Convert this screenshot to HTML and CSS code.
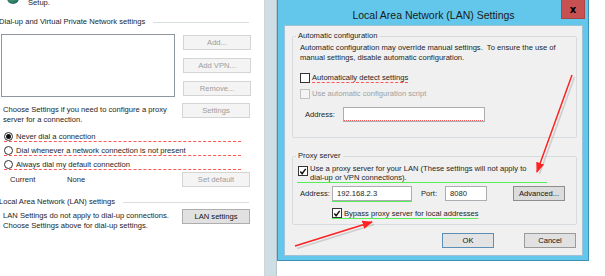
FILE: index.html
```html
<!DOCTYPE html>
<html lang="en">
<head>
    <meta charset="UTF-8">
    <title>Local Area Network (LAN) Settings</title>
    <link rel="stylesheet" href="styles.css">
</head>
<body>
    <div class="screen">
        <!-- Internet Options, Connections tab (behind) -->
        <div class="connections">
            <div class="setup">
                <span class="globe"></span>
                <span class="setup-text">Setup.</span>
            </div>
            <div class="heading heading-vpn">Dial-up and Virtual Private Network settings</div>
            <div class="vpn-row">
                <div class="listbox"></div>
                <div class="btn-col">
                    <div class="btn disabled">Add...</div>
                    <div class="btn disabled">Add VPN...</div>
                    <div class="btn disabled">Remove...</div>
                </div>
            </div>
            <div class="settings-row">
                <div class="note">Choose Settings if you need to configure a proxy<br>server for a connection.</div>
                <div class="btn disabled">Settings</div>
            </div>
            <div class="radios">
                <div class="radio-row"><span class="radio on"></span>Never dial a connection</div>
                <div class="radio-row"><span class="radio"></span>Dial whenever a network connection is not present</div>
                <div class="radio-row"><span class="radio"></span>Always dial my default connection</div>
            </div>
            <div class="current-row">
                <span class="current">Current</span>
                <span class="none">None</span>
                <div class="btn disabled">Set default</div>
            </div>
            <div class="heading heading-lan">Local Area Network (LAN) settings</div>
            <div class="lan-row">
                <div class="note">LAN Settings do not apply to dial-up connections.<br>Choose Settings above for dial-up settings.</div>
                <div class="btn">LAN settings</div>
            </div>
        </div>

        <div class="band"></div>

        <!-- LAN settings dialog -->
        <div class="dialog">
            <div class="titlebar">
                <span class="title">Local Area Network (LAN) Settings</span>
                <span class="close">x</span>
            </div>
            <div class="dialog-body">
                <fieldset class="group group-auto">
                    <legend>Automatic configuration</legend>
                    <div class="auto-note">Automatic configuration may override manual settings.&nbsp; To ensure the use of<br>manual settings, disable automatic configuration.</div>
                    <div class="check-row detect"><span class="check"></span><span class="red-dash">Automatically detect settings</span></div>
                    <div class="check-row script disabled-text"><span class="check off"></span>Use automatic configuration script</div>
                    <div class="field-row script-addr">
                        <span class="label">Address:</span>
                        <span class="input wide red-dot"></span>
                    </div>
                </fieldset>

                <fieldset class="group group-proxy">
                    <legend>Proxy server</legend>
                    <div class="check-row use-proxy green-line">
                        <span class="check">
                            <svg width="9" height="9" viewBox="0 0 9 9"><path d="M1.5 4.5 L3.5 7 L7.5 1.5" fill="none" stroke="#111" stroke-width="1.6"/></svg>
                        </span>
                        <span>Use a proxy server for your LAN (These settings will not apply to<br>dial-up or VPN connections).</span>
                    </div>
                    <div class="field-row proxy-addr">
                        <span class="label">Address:</span>
                        <span class="input addr green-under">192.168.2.3</span>
                        <span class="label port-label">Port:</span>
                        <span class="input port">8080</span>
                        <span class="btn advanced">Advanced...</span>
                    </div>
                    <div class="check-row bypass green-line">
                        <span class="check">
                            <svg width="9" height="9" viewBox="0 0 9 9"><path d="M1.5 4.5 L3.5 7 L7.5 1.5" fill="none" stroke="#111" stroke-width="1.6"/></svg>
                        </span>
                        <span>Bypass proxy server for local addresses</span>
                    </div>
                </fieldset>

                <div class="dialog-buttons">
                    <span class="btn ok">OK</span>
                    <span class="btn cancel">Cancel</span>
                </div>
            </div>
        </div>

        <!-- red annotation arrows drawn over the screenshot -->
        <svg class="arrows" width="605" height="276" viewBox="0 0 605 276">
            <defs>
                <marker id="head" viewBox="0 0 10 10" refX="9" refY="5" markerWidth="7" markerHeight="7" orient="auto">
                    <path d="M0 1 L10 5 L0 9 Z" fill="#f22"/>
                </marker>
            </defs>
            <line x1="573" y1="76" x2="538" y2="173" stroke="#999" stroke-opacity="0.4" stroke-width="1.5" transform="translate(1.5,1)"/>
            <line x1="572" y1="75" x2="537" y2="172" stroke="#f22" stroke-width="1.5" marker-end="url(#head)"/>
            <line x1="296" y1="247" x2="373" y2="223" stroke="#999" stroke-opacity="0.4" stroke-width="1.5" transform="translate(1,1.5)"/>
            <line x1="295" y1="246" x2="372" y2="222" stroke="#f22" stroke-width="1.5" marker-end="url(#head)"/>
        </svg>
    </div>
</body>
</html>
```

FILE: styles.css
```css
* {
    box-sizing: border-box;
}
body {
    margin: 0;
    background: #fff;
    font-family: "Liberation Sans", Arial, sans-serif;
    font-size: 7.6px;
    color: #1e1e1e;
    white-space: nowrap;
}
.screen {
    position: relative;
    width: 605px;
    height: 276px;
    display: flex;
    overflow: hidden;
}

/* ---------- connections tab ---------- */
.connections {
    width: 264px;
    flex-shrink: 0;
}
.setup {
    height: 8px;
    overflow: hidden;
    display: flex;
    align-items: flex-end;
    gap: 9px;
    padding-left: 7px;
}
.globe {
    width: 12px;
    height: 12px;
    border-radius: 50%;
    background: radial-gradient(circle at 40% 30%, #7bc47f, #2b7a66 60%, #1d4f7a);
    margin-bottom: 4px;
}
.setup-text {
    line-height: 12px;
    margin-bottom: -1px;
}
.heading {
    display: flex;
    align-items: center;
    line-height: 10px;
    margin-left: -1px;
    width: 250px;
}
.heading::after {
    content: "";
    flex: 1;
    border-top: 1px solid #d8dde0;
    margin-left: 8px;
}
.heading-vpn {
    margin-top: 9px;
}
.heading-lan {
    margin-top: 10px;
}
.vpn-row {
    display: flex;
    gap: 8px;
    margin-top: 7px;
    padding-left: 1px;
}
.listbox {
    width: 174px;
    height: 63px;
    border: 1px solid #8f959c;
    background: #fff;
}
.btn-col {
    display: flex;
    flex-direction: column;
    gap: 8px;
    margin-top: 1px;
}
.btn {
    width: 68px;
    height: 15px;
    display: flex;
    align-items: center;
    justify-content: center;
    border: 1px solid #adadad;
    background: #e1e1e1;
    color: #111;
}
.btn.disabled {
    border-color: #d4d4d4;
    background: #f4f4f4;
    color: #9c9c9c;
}
.settings-row,
.lan-row,
.current-row {
    display: flex;
    justify-content: space-between;
    width: 250px;
}
.settings-row {
    margin-top: 6px;
}
.note {
    line-height: 10px;
    padding-left: 3px;
    margin-top: 2px;
}
.radios {
    margin-top: 3px;
    width: 241px;
}
.radio-row {
    display: flex;
    align-items: center;
    gap: 3px;
    padding-top: 4px;
    line-height: 9px;
    margin-left: 4px;
    border-bottom: 1px dashed #f55;
}
.radio {
    width: 9px;
    height: 9px;
    border: 1px solid #333;
    border-radius: 50%;
    background: #fff;
    display: flex;
    align-items: center;
    justify-content: center;
}
.radio.on::after {
    content: "";
    width: 5px;
    height: 5px;
    border-radius: 50%;
    background: #111;
}
.current-row {
    margin-top: 2px;
    align-items: center;
}
.current {
    padding-left: 10px;
    width: 67px;
}
.none {
    flex: 1;
}
.lan-row {
    margin-top: 2px;
}

.band {
    width: 13px;
    flex-shrink: 0;
    border-left: 1px solid #d0d4d6;
    border-right: 1px solid #b9c6cb;
    background: #cddfe4;
}

/* ---------- dialog ---------- */
.dialog {
    width: 312px;
    height: 261px;
    flex-shrink: 0;
    border: 1px solid #3e8fb5;
    border-top: none;
    background: #63c7ec;
    display: flex;
    flex-direction: column;
    padding: 0 5px 4px 6px;
}
.titlebar {
    height: 25px;
    flex-shrink: 0;
    display: flex;
    align-items: center;
    justify-content: center;
    position: relative;
}
.title {
    font-size: 10.5px;
    color: #1a1a1a;
    margin-top: 4px;
}
.close {
    position: absolute;
    right: -2px;
    top: 0;
    width: 24px;
    height: 19px;
    background: #c75050;
    border: 1px solid #a94545;
    border-top: none;
    color: #000;
    font-family: "DejaVu Sans", sans-serif;
    font-weight: bold;
    font-size: 10px;
    display: flex;
    align-items: center;
    justify-content: center;
}
.dialog-body {
    flex: 1;
    background: #f0f0f0;
    border: 1px solid #9fc3d4;
    display: flex;
    flex-direction: column;
}
.group {
    margin: 0 5px 0 7px;
    border: 1px solid #d5dbde;
    border-radius: 2px;
    padding: 0 7px;
    min-width: 0;
}
.group legend {
    line-height: 10px;
    padding: 0 2px;
    margin-left: -4px;
}
.group-auto {
    margin-top: 5px;
    padding-top: 2px;
    padding-bottom: 15px;
}
.group-proxy {
    margin-top: 13px;
    padding-top: 3px;
    padding-bottom: 5px;
}
.auto-note {
    line-height: 10px;
}
.check-row {
    display: flex;
    align-items: center;
    gap: 2px;
    line-height: 10px;
}
.check {
    width: 10px;
    height: 10px;
    border: 1px solid #333;
    background: #fff;
    flex-shrink: 0;
    display: flex;
    align-items: center;
    justify-content: center;
}
.check.off {
    border-color: #c2c2c2;
    background: #f4f4f4;
}
.disabled-text {
    color: #a0a0a0;
}
.detect {
    margin-top: 10px;
}
.red-dash {
    border-bottom: 1px dashed #f55;
    line-height: 9px;
}
.script {
    margin-top: 6px;
}
.field-row {
    display: flex;
    align-items: center;
    height: 15px;
}
.script-addr {
    margin-top: 8px;
    padding-left: 5px;
}
.script-addr .label {
    width: 38px;
}
.input {
    height: 15px;
    border: 1px solid #abadb3;
    background: #fff;
    padding-left: 4px;
    display: flex;
    align-items: center;
}
.input.wide {
    width: 142px;
}
.red-dot {
    background: #fff repeating-linear-gradient(90deg, #f55 0 1px, transparent 1px 2px) left bottom / 100% 1px no-repeat;
}
.use-proxy {
    align-items: flex-start;
    line-height: 9px;
    margin-left: -3px;
    padding-left: 1px;
    width: 250px;
}
.use-proxy .check {
    margin-top: 2px;
}
.green-line {
    border-bottom: 1px solid #55ee55;
}
.proxy-addr {
    margin-top: 3px;
}
.proxy-addr .label {
    width: 32px;
}
.input.addr {
    width: 80px;
}
.green-under {
    box-shadow: 0 1px 0 #55ee55;
}
.proxy-addr .port-label {
    width: 24px;
    margin-left: 9px;
}
.input.port {
    width: 42px;
}
.btn.advanced {
    width: 52px;
    height: 15px;
    margin-left: 26px;
    border-color: #8d8d8d;
    background: #dcdcdc;
}
.bypass {
    margin-top: 7px;
    margin-left: 32px;
    width: 146px;
    line-height: 9px;
}
.dialog-buttons {
    display: flex;
    justify-content: flex-end;
    gap: 30px;
    margin: 8px 6px 0 0;
}
.btn.ok,
.btn.cancel {
    width: 52px;
    height: 15px;
}
.btn.ok {
    border-color: #5b8fb8;
    background: #e3e3e3;
}
.btn.cancel {
    border-color: #9a9a9a;
}

/* annotation layer */
.arrows {
    position: absolute;
    left: 0;
    top: 0;
    pointer-events: none;
}
```
